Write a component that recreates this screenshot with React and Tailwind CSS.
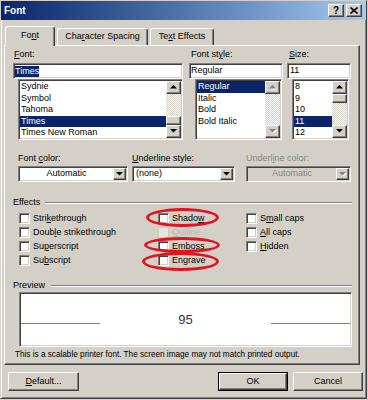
import React from "react";

const raised =
  "border border-t-white border-l-white border-r-[#404040] border-b-[#404040] shadow-[inset_-1px_-1px_0_#808080]";
const sunken =
  "border border-t-[#808080] border-l-[#808080] border-r-white border-b-white shadow-[inset_1px_1px_0_#404040,inset_-1px_-1px_0_#d4d0c8]";

function U({ children }) {
  return <span className="underline decoration-1 underline-offset-[1px]">{children}</span>;
}

function Tri({ up, disabled }) {
  return (
    <svg width="8" height="5" viewBox="0 0 8 5" className="block">
      {disabled && <path d={up ? "M1 4.5h7L4.5 1z" : "M1 1h7L4.5 4.5z"} fill="#ffffff" />}
      <path d={up ? "M0 3.5h7L3.5 0z" : "M0 0h7L3.5 3.5z"} fill={disabled ? "#808080" : "#000000"} />
    </svg>
  );
}

function ArrowBtn({ up, disabled }) {
  return (
    <div className={`${raised} bg-[#d4d0c8] h-[13px] flex items-center justify-center shrink-0`}>
      <Tri up={up} disabled={disabled} />
    </div>
  );
}

function ScrollBar({ thumb, disabled }) {
  return (
    <div className="w-[15px] h-full flex flex-col shrink-0">
      <ArrowBtn up disabled={disabled} />
      <div
        className={`flex-1 flex flex-col ${thumb === "end" ? "justify-end" : "justify-start"} bg-[image:repeating-conic-gradient(#ffffff_0%_25%,#d4d0c8_0%_50%)] bg-[length:2px_2px]`}
      >
        {thumb && <div className={`${raised} bg-[#d4d0c8] h-[9px]`} />}
      </div>
      <ArrowBtn disabled={disabled} />
    </div>
  );
}

function List({ items, selected, thumb, disabled, cls }) {
  return (
    <div className={`${sunken} bg-white h-[61px] flex p-[1px] ${cls}`}>
      <div className="flex-1 flex flex-col overflow-hidden">
        {items.map((it) => (
          <div
            key={it}
            className={`h-[11.5px] leading-[11.5px] pl-[1px] text-[9px] whitespace-nowrap shrink-0 ${
              it === selected ? "bg-[#0a246a] text-white" : ""
            }`}
          >
            {it}
          </div>
        ))}
      </div>
      <ScrollBar thumb={thumb} disabled={disabled} />
    </div>
  );
}

function Dropdown({ text, center, disabled }) {
  return (
    <div className={`${sunken} h-[16px] flex p-[1px] ${disabled ? "bg-[#d4d0c8]" : "bg-white"}`}>
      <div
        className={`flex-1 flex items-center ${center ? "justify-center" : "pl-[2px]"} ${
          disabled ? "text-[#8a8780]" : ""
        }`}
      >
        {text}
      </div>
      <div className={`${raised} bg-[#d4d0c8] w-[13px] flex items-center justify-center`}>
        <Tri disabled={disabled} />
      </div>
    </div>
  );
}

function Check({ children, faint }) {
  return (
    <div className="flex items-center h-[14px]">
      <div
        className={
          faint
            ? "w-[11px] h-[11px] border border-[#d0ccc4] bg-[#e6e4e0] shrink-0"
            : `w-[11px] h-[11px] ${sunken} bg-white shrink-0`
        }
      />
      <span className={`ml-[3px] leading-[11px] whitespace-nowrap ${faint ? "text-[#bdb9b1]" : ""}`}>
        {children}
      </span>
    </div>
  );
}

function GroupHeader({ children, gap }) {
  return (
    <div className="flex items-center h-[11px] pl-[8px] pr-[7px]">
      <span className="leading-[11px]">{children}</span>
      <div className={`flex-1 ${gap} h-[2px] border-t border-t-[#808080] border-b border-b-white`} />
    </div>
  );
}

function Button({ children, def, cls }) {
  return (
    <div className={`h-[19px] ${def ? "border border-black" : ""} ${cls}`}>
      <div className={`${raised} bg-[#d4d0c8] h-full flex items-center justify-center`}>{children}</div>
    </div>
  );
}

export default function App() {
  return (
    <div className="relative w-[368px] h-[400px] bg-[#d4d0c8] overflow-hidden font-['Liberation_Sans',Arial,sans-serif] text-[9px] text-black">
      <div className="w-[367px] h-[399px] border border-t-[#d4d0c8] border-l-[#d4d0c8] border-r-[#404040] border-b-[#404040] shadow-[inset_1px_1px_0_#ffffff,inset_-1px_-1px_0_#808080] flex flex-col">
        {/* title bar */}
        <div className="h-[19px] bg-linear-to-r from-[#0a246a] to-[#a6caf0] flex items-center pl-[3px] pr-[4px]">
          <span className="text-white font-bold text-[10px]">Font</span>
          <div className="ml-auto flex gap-[2px]">
            <div className={`${raised} bg-[#d4d0c8] w-[16px] h-[13px] flex items-center justify-center font-bold text-[10px] leading-none`}>
              ?
            </div>
            <div className={`${raised} bg-[#d4d0c8] w-[16px] h-[13px] flex items-center justify-center`}>
              <svg width="8" height="7" viewBox="0 0 8 7">
                <path d="M0.5 0.5L7.5 6.5M7.5 0.5L0.5 6.5" stroke="#000" strokeWidth="1.6" />
              </svg>
            </div>
          </div>
        </div>

        <div className="pl-[3px] pt-[5px] flex flex-col">
          {/* tabs */}
          <div className="flex items-end h-[20px] pl-[1px]">
            <div className="relative z-10 -mb-[1px] w-[50px] h-[20px] bg-[#d4d0c8] border-t border-l border-r border-t-white border-l-white border-r-[#404040] rounded-t-[3px] shadow-[inset_-1px_0_0_#808080] flex items-center justify-center pb-[1px]">
              Fo<U>n</U>t
            </div>
            <div className="ml-[2px] w-[91px] h-[17px] border-t border-l border-r border-t-white border-l-white border-r-[#404040] rounded-t-[3px] shadow-[inset_-1px_0_0_#808080] flex items-center justify-center">
              Cha<U>r</U>acter Spacing
            </div>
            <div className="ml-[2px] w-[64px] h-[17px] border-t border-l border-r border-t-white border-l-white border-r-[#404040] rounded-t-[3px] shadow-[inset_-1px_0_0_#808080] flex items-center justify-center">
              Te<U>x</U>t Effects
            </div>
          </div>

          {/* panel */}
          <div className="w-[356px] h-[320px] border border-t-white border-l-white border-r-[#404040] border-b-[#404040] shadow-[inset_-1px_-1px_0_#808080] flex flex-col">
            {/* row 1 */}
            <div className="flex pl-[8px] pt-[3px]">
              <div className="w-[170px] flex flex-col">
                <div className="leading-[11px] h-[11px] pl-[1px]">
                  <U>F</U>ont:
                </div>
                <div className={`mt-[3px] h-[16px] ${sunken} bg-white flex items-center pl-[1px]`}>
                  <span className="bg-[#0a246a] text-white leading-[11px]">Times</span>
                </div>
                <List
                  cls="ml-[5px]"
                  items={["Sydnie", "Symbol", "Tahoma", "Times", "Times New Roman"]}
                  selected="Times"
                  thumb="end"
                />
              </div>
              <div className="ml-[6px] w-[94px] flex flex-col">
                <div className="leading-[11px] h-[11px] pl-[2px]">
                  Font st<U>y</U>le:
                </div>
                <div className={`mt-[3px] h-[16px] ${sunken} bg-white flex items-center pl-[1px]`}>Regular</div>
                <List
                  cls="ml-[6px] mr-[1px]"
                  items={["Regular", "Italic", "Bold", "Bold Italic"]}
                  selected="Regular"
                  disabled
                />
              </div>
              <div className="ml-[4px] w-[64px] flex flex-col">
                <div className="leading-[11px] h-[11px] pl-[2px]">
                  <U>S</U>ize:
                </div>
                <div className={`mt-[3px] h-[16px] ${sunken} bg-white flex items-center pl-[2px]`}>11</div>
                <List cls="ml-[5px] mr-[2px]" items={["8", "9", "10", "11", "12"]} selected="11" thumb="start" />
              </div>
            </div>

            {/* row 2 */}
            <div className="flex pl-[13px] mt-[13px]">
              <div className="w-[110px] flex flex-col">
                <div className="leading-[11px] h-[11px]">
                  Font <U>c</U>olor:
                </div>
                <div className="mt-[2px]">
                  <Dropdown text="Automatic" center />
                </div>
              </div>
              <div className="ml-[4px] w-[103px] flex flex-col">
                <div className="leading-[11px] h-[11px]">
                  <U>U</U>nderline style:
                </div>
                <div className="mt-[2px]">
                  <Dropdown text="(none)" />
                </div>
              </div>
              <div className="ml-[11px] w-[105px] flex flex-col">
                <div className="leading-[11px] h-[11px] text-[#8a8780]">
                  Underl<U>i</U>ne color:
                </div>
                <div className="mt-[2px]">
                  <Dropdown text="Automatic" center disabled />
                </div>
              </div>
            </div>

            {/* effects */}
            <div className="mt-[15px]">
              <GroupHeader gap="ml-[5px]">Effects</GroupHeader>
            </div>
            <div className="mt-[3px] flex pl-[14px]">
              <div className="w-[139px] flex flex-col">
                <Check>
                  Stri<U>k</U>ethrough
                </Check>
                <Check>
                  Doub<U>l</U>e strikethrough
                </Check>
                <Check>
                  Su<U>p</U>erscript
                </Check>
                <Check>
                  Su<U>b</U>script
                </Check>
              </div>
              <div className="w-[88px] flex flex-col">
                <Check>
                  Shado<U>w</U>
                </Check>
                <Check faint>
                  <U>O</U>utline
                </Check>
                <Check>
                  <U>E</U>mboss
                </Check>
                <Check>
                  En<U>g</U>rave
                </Check>
              </div>
              <div className="flex flex-col">
                <Check>
                  S<U>m</U>all caps
                </Check>
                <Check>
                  <U>A</U>ll caps
                </Check>
                <Check>
                  <U>H</U>idden
                </Check>
              </div>
            </div>

            {/* preview */}
            <div className="mt-[13px]">
              <GroupHeader gap="ml-[6px]">Preview</GroupHeader>
            </div>
            <div className={`mt-[1px] ml-[14px] w-[333px] h-[55px] ${sunken} bg-white pt-[20px] px-[1px]`}>
              <div className="flex h-[14px]">
                <div className="w-[79px] h-[1px] mt-[10px] bg-[#808080]" />
                <div className="flex-1 text-center text-[13px] leading-[14px] text-[#333333]">95</div>
                <div className="w-[79px] h-[1px] mt-[10px] bg-[#808080]" />
              </div>
            </div>
            <div className="mt-[3px] pl-[10px] text-[8.2px] leading-[10px] whitespace-nowrap">
              This is a scalable printer font. The screen image may not match printed output.
            </div>
          </div>

          {/* buttons */}
          <div className="mt-[7px] flex pl-[4px] pr-[3px]">
            <Button cls="w-[71px]">
              <span>
                <U>D</U>efault...
              </span>
            </Button>
            <Button def cls="ml-auto w-[70px]">
              OK
            </Button>
            <Button cls="ml-[5px] w-[70px]">Cancel</Button>
          </div>
        </div>
      </div>

      {/* red annotation ellipses */}
      <div className="absolute left-[146px] top-[208px] w-[73px] h-[19px] rounded-[50%] border-[3px] border-[#e0141e]" />
      <div className="absolute left-[144px] top-[237px] w-[76px] h-[16px] rounded-[50%] border-[3px] border-[#e0141e]" />
      <div className="absolute left-[142px] top-[252px] w-[77px] h-[19px] rounded-[50%] border-[3px] border-[#e0141e]" />
    </div>
  );
}
